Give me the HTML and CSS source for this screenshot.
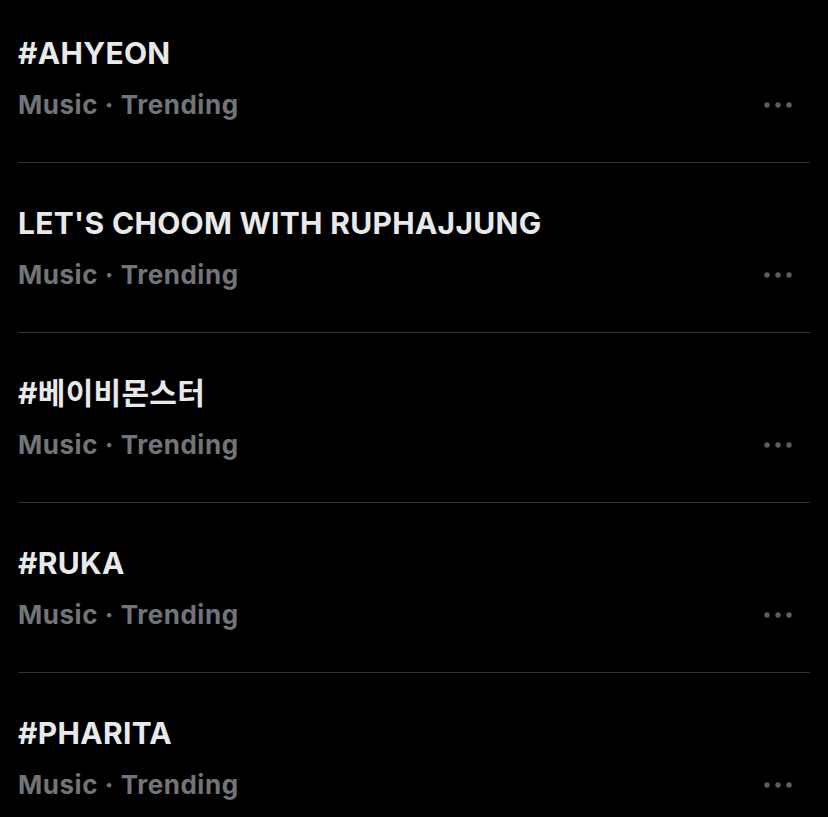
FILE: index.html
```html
<!DOCTYPE html>
<html lang="en">
<head>
    <meta charset="UTF-8">
    <meta name="viewport" content="width=device-width, initial-scale=1.0">
    <title>Trending</title>
    <link rel="stylesheet" href="styles.css">
</head>
<body>
    <ul class="trend-list">
        <li class="trend">
            <div class="trend-title">#AHYEON</div>
            <div class="trend-meta">
                <span class="trend-context">Music · Trending</span>
                <svg class="more" width="32" height="8" viewBox="0 0 32 8"><circle cx="3" cy="4" r="2.7"/><circle cx="14" cy="4" r="2.7"/><circle cx="25" cy="4" r="2.7"/></svg>
            </div>
        </li>
        <li class="trend">
            <div class="trend-title">LET'S CHOOM WITH RUPHAJJUNG</div>
            <div class="trend-meta">
                <span class="trend-context">Music · Trending</span>
                <svg class="more" width="32" height="8" viewBox="0 0 32 8"><circle cx="3" cy="4" r="2.7"/><circle cx="14" cy="4" r="2.7"/><circle cx="25" cy="4" r="2.7"/></svg>
            </div>
        </li>
        <li class="trend">
            <div class="trend-title">#베이비몬스터</div>
            <div class="trend-meta">
                <span class="trend-context">Music · Trending</span>
                <svg class="more" width="32" height="8" viewBox="0 0 32 8"><circle cx="3" cy="4" r="2.7"/><circle cx="14" cy="4" r="2.7"/><circle cx="25" cy="4" r="2.7"/></svg>
            </div>
        </li>
        <li class="trend">
            <div class="trend-title">#RUKA</div>
            <div class="trend-meta">
                <span class="trend-context">Music · Trending</span>
                <svg class="more" width="32" height="8" viewBox="0 0 32 8"><circle cx="3" cy="4" r="2.7"/><circle cx="14" cy="4" r="2.7"/><circle cx="25" cy="4" r="2.7"/></svg>
            </div>
        </li>
        <li class="trend">
            <div class="trend-title">#PHARITA</div>
            <div class="trend-meta">
                <span class="trend-context">Music · Trending</span>
                <svg class="more" width="32" height="8" viewBox="0 0 32 8"><circle cx="3" cy="4" r="2.7"/><circle cx="14" cy="4" r="2.7"/><circle cx="25" cy="4" r="2.7"/></svg>
            </div>
        </li>
    </ul>
</body>
</html>
```

FILE: styles.css
```css
body {
    margin: 0;
    background: #000;
    font-family: Inter, "Noto Sans CJK KR", sans-serif;
    overflow: hidden;
}

.trend-list {
    list-style: none;
    margin: 0;
    padding: 0 18px;
}

.trend {
    height: 127px;
    padding-top: 42px;
    border-bottom: 1px solid #2f3336;
}

.trend:first-child {
    padding-top: 35px;
}

.trend-title {
    font-size: 30px;
    line-height: 36px;
    font-weight: 700;
    letter-spacing: 0.3px;
    color: #e7e9ea;
}

.trend-meta {
    display: flex;
    align-items: center;
    justify-content: space-between;
    margin-top: 18px;
    padding-right: 14px;
}

.trend-context {
    font-size: 26px;
    line-height: 32px;
    font-weight: 700;
    letter-spacing: 0.55px;
    color: #717579;
}

.more {
    fill: #5b5f63;
}
```
